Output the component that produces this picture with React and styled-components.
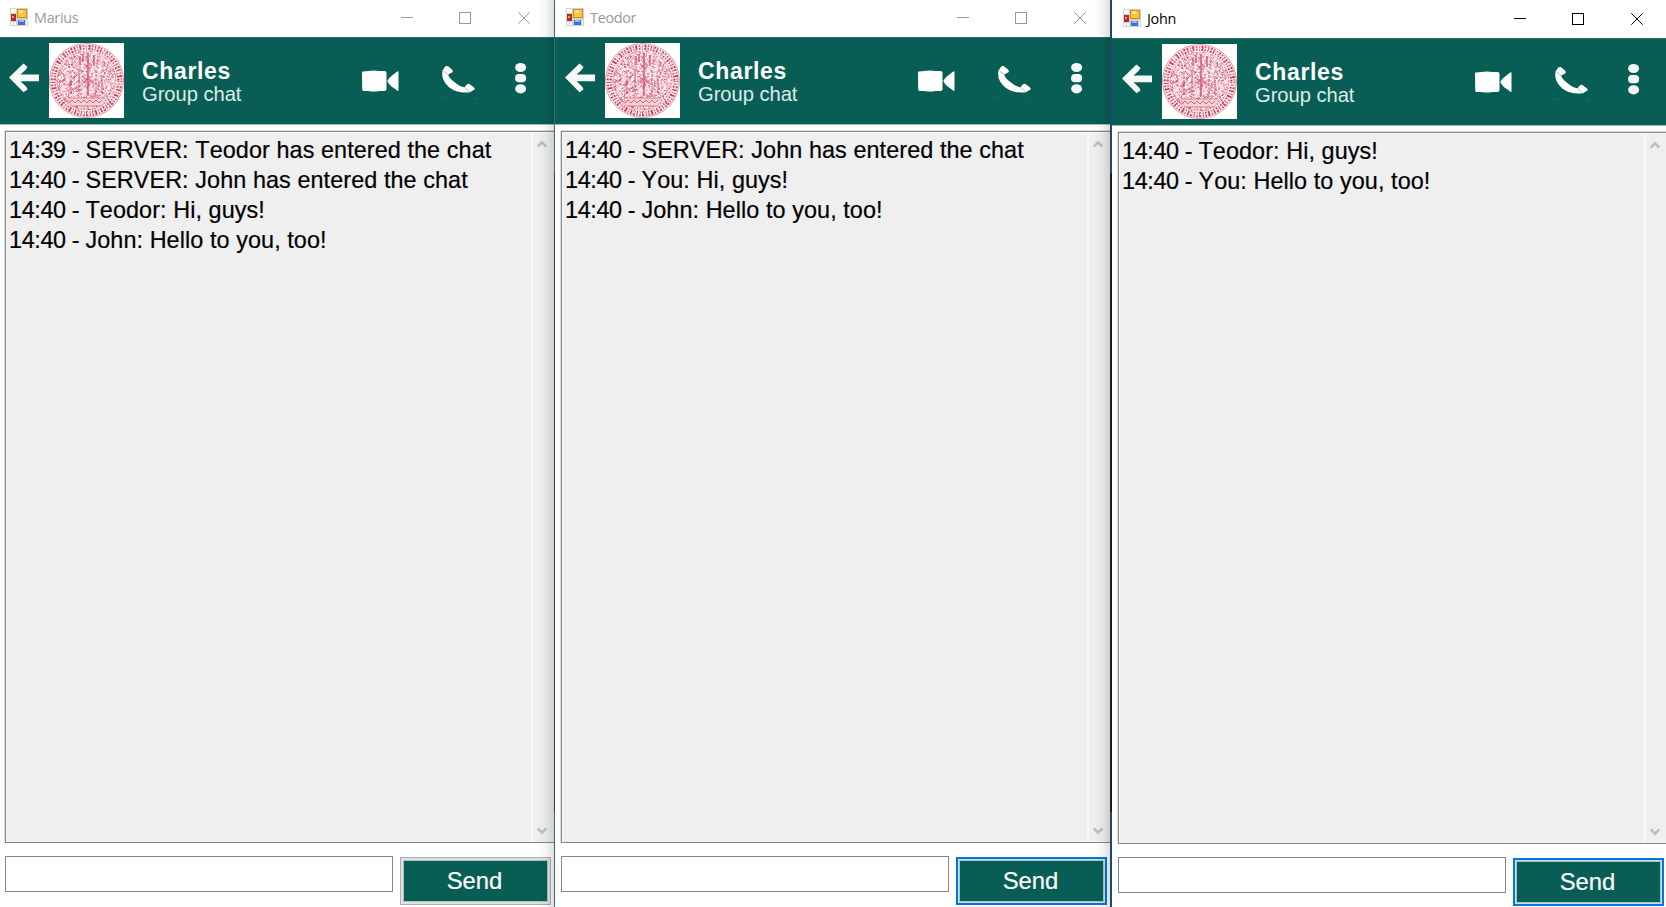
import React from 'react';
import styled, { createGlobalStyle } from 'styled-components';

const Global = createGlobalStyle`
  * { box-sizing: border-box; }
  body { margin: 0; background: #fff; overflow: hidden; }
  svg { display: block; }
`;

const Desktop = styled.div`
  display: grid;
  grid-template-columns: 554px 556px 556px;
  width: 1666px;
  height: 907px;
  overflow: hidden;
  font-family: 'Liberation Sans', Arial, sans-serif;
  font-kerning: none;
`;

const Frame = styled.section`
  position: relative;
  display: flex;
  flex-direction: column;
  min-width: 0;
  height: 907px;
  overflow: hidden;
  background: #fff;
  border-left: ${p => p.$edge}px solid ${p => p.$edgeColor};
  border-image: ${p => (p.$edge ? `linear-gradient(${p.$edgeColor} 174px, ${p.$edgeDark} 174px 811px, ${p.$edgeColor} 811px) 1` : 'none')};
  padding-top: ${p => p.$drop}px;
  --inset: ${p => (p.$edge ? 1 : 0)}px;
`;

const EdgeShadow = styled.div`
  position: absolute;
  inset: 0 0 0 auto;
  width: 16px;
  pointer-events: none;
  background: linear-gradient(to right, rgba(0,0,0,0), rgba(0,0,0,0.04) 50%, rgba(0,0,0,0.13));
`;

const TitleBar = styled.div`
  display: flex;
  flex: none;
  height: 37px;
  padding: 8px 0 0 calc(10px + var(--inset));
  color: ${p => (p.$active ? '#000' : '#999')};
`;

const WindowTitle = styled.div`
  width: 367px;
  margin-left: 6px;
  font: 14.4px/20px 'Open Sans', 'Noto Sans', sans-serif;
  letter-spacing: -0.3px;
`;

const Controls = styled.div`
  display: grid;
  grid-template-columns: 58px 59px 12px;
  align-items: start;
  padding-top: 4px;
`;

const Header = styled.header`
  display: flex;
  flex: none;
  height: 88px;
  padding: 5px 0 0 calc(8px + var(--inset));
  background: #085e54;
  border-top: 1px solid #2b6f68;
  border-bottom: 1px solid #9dbfbb;
`;

const BackSlot = styled.div`
  width: 41px;
  padding-top: 20px;
`;

const Contact = styled.div`
  width: 237px;
  padding: 16px 0 0 18px;
  color: #fff;
`;

const ContactName = styled.div`
  font-size: 23px;
  line-height: 25px;
  font-weight: bold;
  letter-spacing: 0.65px;
`;

const ContactKind = styled.div`
  margin-top: -1px;
  color: #dfebe9;
  font-size: 20.2px;
  line-height: 22px;
  letter-spacing: -0.05px;
`;

const Log = styled.div`
  display: flex;
  flex: none;
  height: 712px;
  margin: 6px 0 0 calc(5px + var(--inset));
  border: 1px solid #868686;
  border-right: 0;
  background: #efefef;
  box-shadow: inset 1px 1px 0 #fafafa, 0 -1px 0 #ddd, -1px 0 0 #ddd;
`;

const Messages = styled.div`
  flex: none;
  width: 527px;
  padding: 3px 0 0 3px;
  border-right: 2px solid #f9f9f9;
  color: #000;
  font-size: 23.4px;
  line-height: 30px;
  letter-spacing: 0.08px;
  white-space: nowrap;
  -webkit-text-stroke: 0.2px #000;
`;

const Stamp = styled.span`
  letter-spacing: -0.36px;
`;

const ScrollTrack = styled.div`
  display: flex;
  flex-direction: column;
  justify-content: space-between;
  padding: 8px 0 7px 4px;
`;

const Composer = styled.form`
  display: flex;
  align-items: flex-start;
  margin: 13px 0 0 calc(5px + var(--inset));
`;

const MessageInput = styled.input`
  width: 388px;
  height: 36px;
  padding: 0 4px;
  border: 1px solid #868686;
  border-radius: 0;
  outline: 0;
  background: #fff;
  font: 23.4px 'Liberation Sans', Arial, sans-serif;
`;

const SendButton = styled.button`
  width: 151px;
  height: 48px;
  margin: 1px 0 0 7px;
  padding: 0 2px 0 0;
  border: ${p => (p.$focused ? '2px solid #0078d7' : '1px solid #b0b0b0')};
  border-radius: 0;
  background: #085e54;
  box-shadow: inset 0 0 0 ${p => (p.$focused ? '1px #c9dcef, inset 0 0 0 2px #a9c6c2' : '2px #e0e0e0, inset 0 0 0 3px #a9c6c2')};
  color: #fff;
  font: 23.8px/40px 'Liberation Sans', Arial, sans-serif;
  -webkit-text-stroke: 0.2px #fff;
`;

const AppIcon = () => (
  <svg width="18" height="18" viewBox="0 0 18 18">
    <rect width="18" height="18" fill="#d2d2d2" />
    <rect x="1" y="1" width="5" height="4" fill="#fff" />
    <rect x="1" y="6" width="5" height="7" fill="#b72c24" />
    <rect x="2" y="8" width="2" height="2" fill="#ee938c" />
    <rect x="1" y="14" width="2" height="3" fill="#fff" />
    <rect x="4" y="14" width="2" height="3" fill="#fff" />
    <rect x="7" y="1" width="10" height="9" fill="#c98f10" />
    <rect x="8" y="2" width="8" height="7" fill="#fac43c" />
    <rect x="9" y="2" width="4" height="3" fill="#ffe28a" />
    <rect x="8" y="12" width="7" height="5" fill="#3c74d6" />
    <rect x="9" y="12" width="5" height="2" fill="#8cb8f8" />
    <rect x="16" y="12" width="1" height="5" fill="#fff" />
  </svg>
);

const MinimizeIcon = () => (
  <svg width="12" height="12" stroke="currentColor"><path d="M0 5.5H12" /></svg>
);
const MaximizeIcon = () => (
  <svg width="12" height="12" fill="none" stroke="currentColor"><rect x=".5" y=".5" width="11" height="11" /></svg>
);
const CloseIcon = () => (
  <svg width="12" height="12" stroke="currentColor"><path d="M.3.3 11.7 11.7M11.7.3.3 11.7" /></svg>
);

const BackIcon = () => (
  <svg width="31" height="30" viewBox="0 0 31 30" fill="#f7f8f8">
    <path d="M1 14.6 15.5.5 19.5 4 17.5 7 12.5 11.6H31V18.2H12.5L18.5 24 19.5 26.5 15.5 29.2Z" />
  </svg>
);

const noise = (() => {
  let seed = 71;
  const next = () => {
    seed = (seed * 16807) % 2147483647;
    return seed / 2147483647;
  };
  const make = (count, reach) => {
    let d = '';
    for (let i = 0; i < count; i += 1) {
      const angle = next() * Math.PI * 2;
      const radius = Math.sqrt(next()) * reach;
      const x = 37.5 + Math.cos(angle) * radius;
      const y = 37.5 + Math.sin(angle) * radius;
      d += `M${x.toFixed(1)} ${y.toFixed(1)}l${(next() * 4 - 2).toFixed(1)} ${(next() * 4 - 2).toFixed(1)}`;
    }
    return d;
  };
  return { pale: make(420, 30), mid: make(520, 30), dark: make(220, 29), light: make(260, 36) };
})();

const SealAvatar = () => (
  <svg width="75" height="75" viewBox="0 0 75 75" fill="none">
    <rect width="75" height="75" fill="#fff" />
    <circle cx="37.5" cy="37.5" r="37" fill="#fbe9ed" stroke="#dc8493" strokeWidth=".8" />
    <circle cx="37.5" cy="37.5" r="33.3" stroke="#c43a54" strokeWidth="5" strokeDasharray="1.4 1.7 .9 1.6 2 1.4" />
    <circle cx="37.5" cy="37.5" r="33.3" stroke="#f7d5db" strokeWidth="1.4" strokeDasharray="3 2.4" />
    <circle cx="37.5" cy="37.5" r="29.3" stroke="#e09aa6" strokeDasharray="2 .8" />
    <path d={noise.pale} stroke="#f0b1bd" />
    <path d={noise.mid} stroke="#d8687c" strokeWidth=".8" />
    <path d={noise.light} stroke="#fff" strokeWidth=".8" />
    <path d={noise.dark} stroke="#a93f50" strokeWidth=".8" />
    <path d="M39 10V53M31 13V22M34 11V19M45 12V23" stroke="#c9506a" strokeWidth="1.3" />
    <path d="M22 32V52M30 26V51M47 27V51M53 32V50" stroke="#c85468" strokeDasharray="3 1" />
    <path d="M19 55H56L53 63H23Z" fill="#f6d1d8" />
    <path d="M19 55H56M22 63H53" stroke="#d8687c" strokeWidth=".8" />
    <path d="M20 60l3-3 3 3 3-3 3 3 3-3 3 3 3-3 3 3 3-3 3 3 3-3" stroke="#cf5c70" strokeWidth=".9" />
  </svg>
);

const CallActions = () => (
  <svg width="170" height="72" viewBox="0 -7 170 72" fill="#fff">
    <path d="M.5 22.5Q0 21.5 1.5 21.5L7 21Q12 19.8 18 21H23Q25 21 25 23V39Q25 41 23 41H18Q12 42.2 7 41H2Q.7 41 .7 39ZM25.8 31Q27 28 30 26L35 22Q37 20.5 37 22V40Q37 42 35 40L30 36.5Q27 34 25.8 31Z" transform="translate(.5 0)" />
    <g transform="translate(1 0)">
      <path d="M80.5 20.5Q78.5 30 87 37.2Q96 44 108 42.2L112.8 39.3Q113 38.5 111.5 37L107 33.7Q105.7 33.5 104.5 34.7L102.5 37.3Q98 36.8 92 31.7Q86.5 27.5 86.2 24.5L90.5 22.3Q91.5 21 90 19.5L86 16.3Q84 15.5 82.5 17.5Z" />
      <path d="M81.5 21 86 24.3M102.5 37.5 107.5 41.5" stroke="#78a7a1" strokeWidth=".7" />
      <path d="M77 48H83M111 48.5H116" stroke="#1a6a60" />
    </g>
    <g fill="#f5f7f7">
      <ellipse cx="159.6" cy="17.5" rx="5.5" ry="4.6" />
      <rect x="154.1" y="24" width="11" height="8.2" rx="3.8" />
      <ellipse cx="159.6" cy="38.8" rx="5.5" ry="4.6" />
    </g>
  </svg>
);

const Chevron = ({ down }) => (
  <svg width="10" height="8" viewBox="0 0 10 8" fill="none" stroke="#bdbdbd" strokeWidth="2.6">
    <path d={down ? 'M.7 1.4 5 5.7 9.3 1.4' : 'M.7 6.6 5 2.3 9.3 6.6'} />
  </svg>
);

const chats = [
  {
    user: 'Marius', edge: 0, edgeColor: '#fff', drop: 0,
    lines: [
      ['14:39', 'SERVER: Teodor has entered the chat'],
      ['14:40', 'SERVER: John has entered the chat'],
      ['14:40', 'Teodor: Hi, guys!'],
      ['14:40', 'John: Hello to you, too!'],
    ],
  },
  {
    user: 'Teodor', edge: 1, edgeColor: '#3d6a80', edgeDark: '#3c4043', drop: 0, focused: true,
    lines: [
      ['14:40', 'SERVER: John has entered the chat'],
      ['14:40', 'You: Hi, guys!'],
      ['14:40', 'John: Hello to you, too!'],
    ],
  },
  {
    user: 'John', edge: 2, edgeColor: '#1c4a73', edgeDark: '#1a1d1f', drop: 1, focused: true, active: true,
    lines: [
      ['14:40', 'Teodor: Hi, guys!'],
      ['14:40', 'You: Hello to you, too!'],
    ],
  },
];

const ChatWindow = ({ chat }) => (
  <Frame $edge={chat.edge} $edgeColor={chat.edgeColor} $edgeDark={chat.edgeDark} $drop={chat.drop}>
    <TitleBar $active={chat.active}>
      <AppIcon />
      <WindowTitle>{chat.user}</WindowTitle>
      <Controls>
        <MinimizeIcon />
        <MaximizeIcon />
        <CloseIcon />
      </Controls>
    </TitleBar>
    <Header>
      <BackSlot><BackIcon /></BackSlot>
      <SealAvatar />
      <Contact>
        <ContactName>Charles</ContactName>
        <ContactKind>Group chat</ContactKind>
      </Contact>
      <CallActions />
    </Header>
    <Log>
      <Messages>
        {chat.lines.map(([time, text]) => (
          <div key={text}><Stamp>{`${time} - `}</Stamp>{text}</div>
        ))}
      </Messages>
      <ScrollTrack>
        <Chevron />
        <Chevron down />
      </ScrollTrack>
    </Log>
    <Composer onSubmit={e => e.preventDefault()}>
      <MessageInput aria-label="Message" />
      <SendButton $focused={chat.focused}>Send</SendButton>
    </Composer>
    {!chat.active && <EdgeShadow />}
  </Frame>
);

export default function App() {
  return (
    <>
      <Global />
      <Desktop>
        {chats.map(chat => <ChatWindow key={chat.user} chat={chat} />)}
      </Desktop>
    </>
  );
}
